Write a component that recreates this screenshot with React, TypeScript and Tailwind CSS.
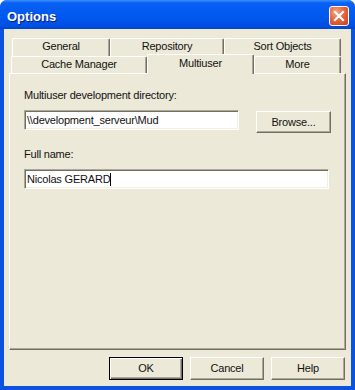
import React from 'react';

const font = "font-['Liberation_Sans',Arial,sans-serif]";
const raised =
  'border border-t-white border-l-white border-b-[#716F64] border-r-[#716F64] shadow-[inset_-1px_-1px_0_#ACA899]';
const sunken =
  'border border-t-[#ACA899] border-l-[#ACA899] border-b-white border-r-white shadow-[inset_1px_1px_0_#716F64,inset_-1px_-1px_0_#F1EFE2] bg-white';
const tab =
  'flex items-center justify-center border-t border-l border-r border-t-white border-l-white border-r-[#716F64] rounded-t-[2px] shadow-[inset_-1px_0_0_#ACA899] bg-[#ECE9D8] pb-[2px]';

const backRow = [
  { label: 'General', w: 'w-[98px]' },
  { label: 'Repository', w: 'w-[114px]' },
  { label: 'Sort Objects', w: 'w-[117px]' },
];

const frontRow = [
  { label: 'Cache Manager', w: 'w-[136px]', active: false },
  { label: 'Multiuser', w: 'w-[107px]', active: true },
  { label: 'More', w: 'w-[87px]', active: false },
];

const Button = ({ label, isDefault = false, className = '' }: { label: string; isDefault?: boolean; className?: string }) => (
  <div
    className={`flex items-center justify-center bg-[#ECE9D8] ${
      isDefault
        ? 'border border-black shadow-[inset_1px_1px_0_#fff,inset_-1px_-1px_0_#716F64,inset_-2px_-2px_0_#ACA899]'
        : raised
    } ${className}`}
  >
    {label}
  </div>
);

export default function App() {
  return (
    <div className={`w-[355px] h-[390px] flex flex-col bg-[#0B52E0] rounded-t-[7px] overflow-hidden text-[11px] tracking-[-0.2px] text-[#111] ${font}`}>
      {/* Title bar */}
      <div className="h-[29px] flex items-start bg-[linear-gradient(to_bottom,#3A93FF_0%,#0A60F4_10%,#0058EE_60%,#004EE2_90%,#0044D0_100%)]">
        <div className="pl-[7px] pt-[7px] text-[13px] font-bold tracking-normal text-white [text-shadow:1px_1px_0_#0A1F80]">Options</div>
        <div className="ml-auto mr-[6px] mt-[6px] w-[20px] h-[20px] rounded-[3px] border border-white bg-[radial-gradient(circle_at_35%_30%,#F4A888_0%,#E6653E_45%,#C8401F_100%)] flex items-center justify-center">
          <svg width="12" height="12" viewBox="0 0 12 12">
            <path d="M2 2 L10 10 M10 2 L2 10" stroke="white" strokeWidth="2.2" strokeLinecap="square" />
          </svg>
        </div>
      </div>

      {/* Client area */}
      <div className="flex-1 mx-[4px] mb-[4px] bg-[#ECE9D8] flex flex-col pt-[9px]">
        {/* back tab row */}
        <div className="flex h-[18px] ml-[8px]">
          {backRow.map((t) => (
            <div key={t.label} className={`${tab} ${t.w} h-[18px]`}>
              {t.label}
            </div>
          ))}
        </div>
        {/* front tab row */}
        <div className="flex items-end h-[17px] ml-[7px]">
          {frontRow.map((t) =>
            t.active ? (
              <div key={t.label} className={`${tab} ${t.w} h-[20px] -mb-px relative z-10`}>
                {t.label}
              </div>
            ) : (
              <div key={t.label} className={`${tab} ${t.w} h-[17px]`}>
                {t.label}
              </div>
            )
          )}
        </div>

        {/* Tab panel */}
        <div className="ml-[5px] w-[337px] h-[277px] border border-t-white border-l-white border-b-[#716F64] border-r-[#716F64] shadow-[inset_-1px_-1px_0_#ACA899] pl-[14px] pt-[15px] flex flex-col">
          <div className="h-[13px] leading-[13px]">Multiuser development directory:</div>
          <div className="flex items-start mt-[8px]">
            <div className={`${sunken} w-[215px] h-[20px] flex items-center pl-[2px]`}>{'\\\\development_serveur\\Mud'}</div>
            <Button label="Browse..." className="ml-[17px] mt-px w-[75px] h-[22px]" />
          </div>
          <div className="h-[13px] leading-[13px] mt-[15px]">Full name:</div>
          <div className={`${sunken} mt-[8px] w-[305px] h-[20px] flex items-center pl-[2px]`}>
            Nicolas GERARD<span className="w-px h-[13px] bg-black" />
          </div>
        </div>

        {/* Bottom buttons */}
        <div className="flex justify-end gap-[7px] mt-[7px] mr-[6px]">
          <Button label="OK" isDefault className="w-[74px] h-[23px]" />
          <Button label="Cancel" className="w-[74px] h-[23px]" />
          <Button label="Help" className="w-[74px] h-[23px]" />
        </div>
      </div>
    </div>
  );
}
